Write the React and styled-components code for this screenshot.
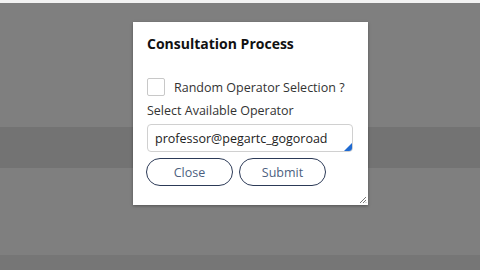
import { createGlobalStyle } from "styled-components";
import styled from "styled-components";

const Global = createGlobalStyle`
  html, body {
    margin: 0;
    padding: 0;
    width: 480px;
    height: 270px;
    overflow: hidden;
    font-family: "Open Sans", "Liberation Sans", sans-serif;
  }
`;

const Page = styled.div`
  position: relative;
  width: 480px;
  height: 270px;
  background: #7f7f7f;
  display: flex;
  flex-direction: column;
`;

const TopStrip = styled.div`
  height: 3px;
  background: #f2f2f2;
`;

const Gap = styled.div`
  height: ${(p) => p.h}px;
`;

const Band = styled.div`
  height: ${(p) => p.h}px;
  background: ${(p) => p.tone};
`;

const Dialog = styled.div`
  position: absolute;
  left: 133px;
  top: 22px;
  width: 235px;
  height: 183px;
  box-sizing: border-box;
  background: #fff;
  box-shadow: 0 1px 3px rgba(0, 0, 0, 0.35);
  padding: 12px 14px 0 14px;
  display: flex;
  flex-direction: column;
`;

const Title = styled.h2`
  margin: 0;
  font-size: 14px;
  font-weight: 700;
  color: #111;
  line-height: 20px;
`;

const CheckRow = styled.label`
  display: flex;
  align-items: center;
  gap: 9px;
  margin-top: 24px;
  font-size: 12.5px;
  color: #333;
`;

const Box = styled.span`
  width: 18px;
  height: 18px;
  box-sizing: border-box;
  border: 1px solid #c8c8c8;
  border-radius: 2px;
  background: #fff;
`;

const FieldLabel = styled.div`
  margin-top: 6px;
  font-size: 12.5px;
  color: #333;
  line-height: 17px;
`;

const Input = styled.div`
  position: relative;
  margin-top: 5px;
  width: 206px;
  height: 28px;
  box-sizing: border-box;
  border: 1px solid #d0d0d0;
  border-radius: 4px;
  padding: 0 7px;
  display: flex;
  align-items: center;
  font-size: 12.5px;
  color: #222;
  overflow: hidden;
`;

const Corner = styled.span`
  position: absolute;
  right: 0;
  bottom: 0;
  width: 0;
  height: 0;
  border-left: 8px solid transparent;
  border-bottom: 8px solid #1f6ad1;
`;

const Actions = styled.div`
  display: flex;
  gap: 6px;
  margin-top: 6px;
  margin-left: -1px;
`;

const Button = styled.button`
  width: 87px;
  height: 28px;
  border: 1px solid #2c3a57;
  border-radius: 14px;
  background: #fff;
  color: #4c5f80;
  font-family: inherit;
  font-size: 12.5px;
  padding: 0;
`;

const Grip = styled.svg`
  position: absolute;
  right: 1px;
  bottom: 1px;
`;

export default function App() {
  return (
    <>
      <Global />
      <Page>
        <TopStrip />
        <Gap h={124} />
        <Band h={41} tone="#737373" />
        <Gap h={87} />
        <Band h={15} tone="#767676" />
        <Dialog>
          <Title>Consultation Process</Title>
          <CheckRow>
            <Box />
            Random Operator Selection ?
          </CheckRow>
          <FieldLabel>Select Available Operator</FieldLabel>
          <Input>
            professor@pegartc_gogoroad
            <Corner />
          </Input>
          <Actions>
            <Button>Close</Button>
            <Button>Submit</Button>
          </Actions>
          <Grip width="8" height="8" viewBox="0 0 8 8">
            <path d="M7 1 L1 7 M7 4 L4 7 M7 6.5 L6.5 7" stroke="#777" strokeWidth="1" />
          </Grip>
        </Dialog>
      </Page>
    </>
  );
}
